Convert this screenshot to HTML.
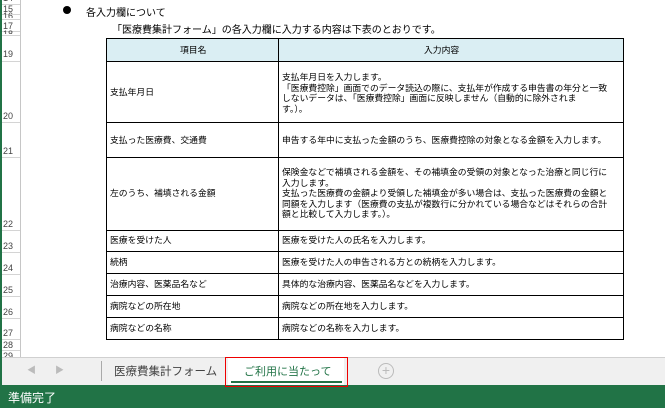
<!DOCTYPE html>
<html><head><meta charset="utf-8"><style>
*{margin:0;padding:0;box-sizing:border-box}
body{width:665px;height:408px;overflow:hidden;background:#fff;position:relative;font-family:"Liberation Sans","Noto Sans CJK JP",sans-serif;color:#000}
.a{position:absolute;white-space:nowrap}
.rn{position:absolute;left:3px;width:16px;font-size:9px;color:#444;line-height:9px}
.rl{position:absolute;left:2px;width:18px;height:1px;background:#d4d4d4}
.t{position:absolute;font-size:8.8px;line-height:10.5px;white-space:nowrap}
.h{position:absolute;left:106px;width:518px;height:1px;background:#000}
</style></head><body>
<div class="a" style="left:0;top:0;width:2px;height:357px;background:#217346"></div>
<div class="a" style="left:20px;top:0;width:1px;height:357px;background:#c6c6c6"></div>
<div class="rl" style="top:4px"></div><div class="rl" style="top:14px"></div><div class="rl" style="top:19px"></div><div class="rl" style="top:31px"></div><div class="rl" style="top:35px"></div><div class="rl" style="top:61px"></div><div class="rl" style="top:122px"></div><div class="rl" style="top:157px"></div><div class="rl" style="top:230px"></div><div class="rl" style="top:252px"></div><div class="rl" style="top:274px"></div><div class="rl" style="top:296px"></div><div class="rl" style="top:318px"></div><div class="rl" style="top:339px"></div><div class="rl" style="top:350px"></div>
<div class="rn" style="top:-6px">14</div><div class="rn" style="top:5px">15</div><div class="rn" style="top:12px;height:6px;overflow:hidden">16</div><div class="rn" style="top:22px">17</div><div class="rn" style="top:30px;height:4px;overflow:hidden">18</div><div class="rn" style="top:50px">19</div><div class="rn" style="top:112px">20</div><div class="rn" style="top:147px">21</div><div class="rn" style="top:220px">22</div><div class="rn" style="top:242px">23</div><div class="rn" style="top:264px">24</div><div class="rn" style="top:286px">25</div><div class="rn" style="top:308px">26</div><div class="rn" style="top:329px">27</div><div class="rn" style="top:341px">28</div><div class="rn" style="top:352px;height:5px;overflow:hidden">29</div>

<div class="a" style="left:63px;top:6px;width:8px;height:8px;border-radius:50%;background:#000"></div>
<div class="a" style="left:86px;top:4px;font-size:10px">各入力欄について</div>
<div class="a" style="left:112px;top:21px;font-size:10px">「医療費集計フォーム」の各入力欄に入力する内容は下表のとおりです。</div>

<div class="a" style="left:106px;top:38px;width:518px;height:23px;background:#daeef3"></div>
<div class="h" style="top:38px"></div><div class="h" style="top:61px"></div><div class="h" style="top:122px"></div><div class="h" style="top:157px"></div><div class="h" style="top:230px"></div><div class="h" style="top:251px"></div><div class="h" style="top:273px"></div><div class="h" style="top:295px"></div><div class="h" style="top:317px"></div><div class="h" style="top:339px"></div>
<div class="a" style="left:106px;top:38px;width:1px;height:302px;background:#000"></div>
<div class="a" style="left:278px;top:38px;width:1px;height:302px;background:#000"></div>
<div class="a" style="left:623px;top:38px;width:1px;height:302px;background:#000"></div>
<div class="t" style="left:180px;top:45px">項目名</div>
<div class="t" style="left:424px;top:45px">入力内容</div>
<div class="t" style="left:110px;top:87px">支払年月日</div>
<div class="t" style="left:282px;top:72px">支払年月日を入力します。<br>「医療費控除」画面でのデータ読込の際に、支払年が作成する申告書の年分と一致<br>しないデータは、「医療費控除」画面に反映しません（自動的に除外されま<br>す。）。</div>
<div class="t" style="left:110px;top:135px">支払った医療費、交通費</div>
<div class="t" style="left:282px;top:135px">申告する年中に支払った金額のうち、医療費控除の対象となる金額を入力します。</div>
<div class="t" style="left:110px;top:188px">左のうち、補填される金額</div>
<div class="t" style="left:282px;top:167px">保険金などで補填される金額を、その補填金の受領の対象となった治療と同じ行に<br>入力します。<br>支払った医療費の金額より受領した補填金が多い場合は、支払った医療費の金額と<br>同額を入力します（医療費の支払が複数行に分かれている場合などはそれらの合計<br>額と比較して入力します。）。</div>
<div class="t" style="left:110px;top:235px">医療を受けた人</div>
<div class="t" style="left:282px;top:235px">医療を受けた人の氏名を入力します。</div>
<div class="t" style="left:110px;top:257px">続柄</div>
<div class="t" style="left:282px;top:257px">医療を受けた人の申告される方との続柄を入力します。</div>
<div class="t" style="left:110px;top:279px">治療内容、医薬品名など</div>
<div class="t" style="left:282px;top:279px">具体的な治療内容、医薬品名などを入力します。</div>
<div class="t" style="left:110px;top:301px">病院などの所在地</div>
<div class="t" style="left:282px;top:301px">病院などの所在地を入力します。</div>
<div class="t" style="left:110px;top:323px">病院などの名称</div>
<div class="t" style="left:282px;top:323px">病院などの名称を入力します。</div>

<div class="a" style="left:0;top:357px;width:665px;height:28px;background:#f0f0f0;border-top:1px solid #d0d0d0"></div>
<div class="a" style="left:0;top:357px;width:2px;height:28px;background:#217346"></div>
<div class="a" style="left:27px;top:363px;font-size:9px;color:#bbb">◀</div>
<div class="a" style="left:55px;top:363px;font-size:9px;color:#bbb">▶</div>
<div class="a" style="left:101px;top:361px;width:1px;height:20px;background:#aaa"></div>
<div class="a" style="left:114px;top:363px;font-size:11.5px;color:#444">医療費集計フォーム</div>
<div class="a" style="left:228px;top:358px;width:116px;height:27px;background:#fff"></div>
<div class="a" style="left:244px;top:363px;font-size:11px;color:#217346">ご利用に当たって</div>
<div class="a" style="left:231px;top:381px;width:111px;height:2px;background:#217346"></div>
<div class="a" style="left:0;top:385px;width:665px;height:23px;background:#217346"></div>
<div class="a" style="left:225px;top:357px;width:123px;height:30px;border:1.5px solid #e00"></div>
<div class="a" style="left:378px;top:363px;width:16px;height:16px;border:1px solid #bbb;border-radius:50%;color:#bbb;font-size:14px;line-height:13px;text-align:center">+</div>
<div class="a" style="left:8px;top:389px;font-size:12px;color:#fff">準備完了</div>
</body></html>
